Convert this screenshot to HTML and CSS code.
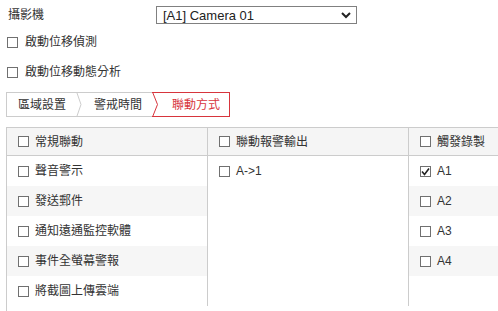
FILE: index.html
```html
<!DOCTYPE html>
<html lang="zh-Hant">
<head>
  <meta charset="UTF-8">
  <title>聯動方式</title>
  <link rel="stylesheet" href="styles.css">
</head>
<body>
  <div class="camera-row">
    <span class="camera-label">攝影機</span>
    <div class="select-box">
      <span>[A1] Camera 01</span>
      <svg class="select-arrow" width="10" height="7" viewBox="0 0 10 7"><polyline points="1,1 5,5 9,1" fill="none" stroke="#222" stroke-width="2"/></svg>
    </div>
  </div>

  <label class="option"><span class="box"></span>啟動位移偵測</label>
  <label class="option"><span class="box"></span>啟動位移動態分析</label>

  <div class="tabs">
    <div class="tab first">區域設置</div>
    <svg class="chevron" width="6" height="23" viewBox="0 0 6 23"><polyline points="1,0 5,11.5 1,23" fill="none" stroke="#ccc" stroke-width="1"/></svg>
    <div class="tab">警戒時間</div>
    <div class="tab active">
      <svg class="chevron-red" width="7" height="25" viewBox="0 0 7 25"><polyline points="0.5,0 5.5,12.5 0.5,25" fill="none" stroke="#d7353d" stroke-width="1"/></svg>
      聯動方式
    </div>
  </div>

  <div class="link-table">
    <div class="col">
      <div class="col-head"><span class="box"></span>常規聯動</div>
      <div class="cell"><span class="box"></span>聲音警示</div>
      <div class="cell"><span class="box"></span>發送郵件</div>
      <div class="cell"><span class="box"></span>通知遠通監控軟體</div>
      <div class="cell"><span class="box"></span>事件全螢幕警報</div>
      <div class="cell"><span class="box"></span>將截圖上傳雲端</div>
    </div>
    <div class="col">
      <div class="col-head"><span class="box"></span>聯動報警輸出</div>
      <div class="cell"><span class="box"></span>A-&gt;1</div>
    </div>
    <div class="col">
      <div class="col-head"><span class="box"></span>觸發錄製</div>
      <div class="cell"><span class="box checked"><svg width="9" height="9" viewBox="0 0 9 9"><polyline points="1,4.5 3.5,7.5 8,1.5" fill="none" stroke="#222" stroke-width="1.6"/></svg></span>A1</div>
      <div class="cell"><span class="box"></span>A2</div>
      <div class="cell"><span class="box"></span>A3</div>
      <div class="cell"><span class="box"></span>A4</div>
    </div>
  </div>
</body>
</html>
```

FILE: styles.css
```css
body {
  margin: 0;
  font-family: "Liberation Sans", "Noto Sans CJK TC", sans-serif;
  font-size: 12px;
  color: #333;
  overflow: hidden;
  background: #fff;
}

.camera-row {
  display: flex;
  align-items: center;
  height: 24px;
  padding: 3px 0 0 8px;
}

.camera-label {
  width: 148px;
  line-height: 16px;
}

.select-box {
  box-sizing: border-box;
  width: 201px;
  height: 18px;
  border: 1px solid #808080;
  display: flex;
  align-items: center;
  justify-content: space-between;
  padding: 0 5px 0 6px;
  font-size: 13px;
  color: #222;
}

.select-arrow {
  display: block;
}

.option {
  display: flex;
  align-items: center;
  height: 30px;
  padding-left: 7px;
  line-height: 16px;
}

.option .box {
  margin-right: 7px;
}

.box {
  box-sizing: border-box;
  width: 11px;
  height: 11px;
  border: 1px solid #707070;
  background: #fff;
  display: inline-flex;
  align-items: center;
  justify-content: center;
  flex-shrink: 0;
}

.tabs {
  display: inline-flex;
  align-items: stretch;
  margin: 5px 0 0 6px;
  height: 23px;
  border: 1px solid #ccc;
}

.tab {
  display: flex;
  align-items: center;
  padding: 0 10px 0 12px;
  line-height: 16px;
}

.tab.first {
  padding-left: 11px;
}

.chevron {
  display: block;
}

.tab.active {
  position: relative;
  margin: -1px -1px -1px 0;
  padding: 0 9px 0 20px;
  border: 1px solid #d7353d;
  border-left: none;
  color: #d7353d;
}

.chevron-red {
  position: absolute;
  left: 0;
  top: -1px;
}

/* the third column runs on past the window, so clip it here */
.link-table {
  display: flex;
  margin: 10px 0 0 6px;
  overflow: hidden;
  border-top: 1px solid #ccc;
  border-left: 1px solid #ccc;
  padding-bottom: 10px;
}

.col {
  width: 200px;
  flex-shrink: 0;
  border-right: 1px solid #ccc;
}

.col-head {
  display: flex;
  align-items: center;
  height: 27px;
  padding-left: 11px;
  background: #f5f5f5;
  border-bottom: 1px solid #ccc;
  line-height: 16px;
}

.cell {
  display: flex;
  align-items: center;
  height: 30px;
  padding-left: 11px;
  line-height: 16px;
}

.cell:nth-child(odd) {
  background: #f6f6f6;
}

.col-head .box,
.cell .box {
  margin-right: 6px;
}
```
